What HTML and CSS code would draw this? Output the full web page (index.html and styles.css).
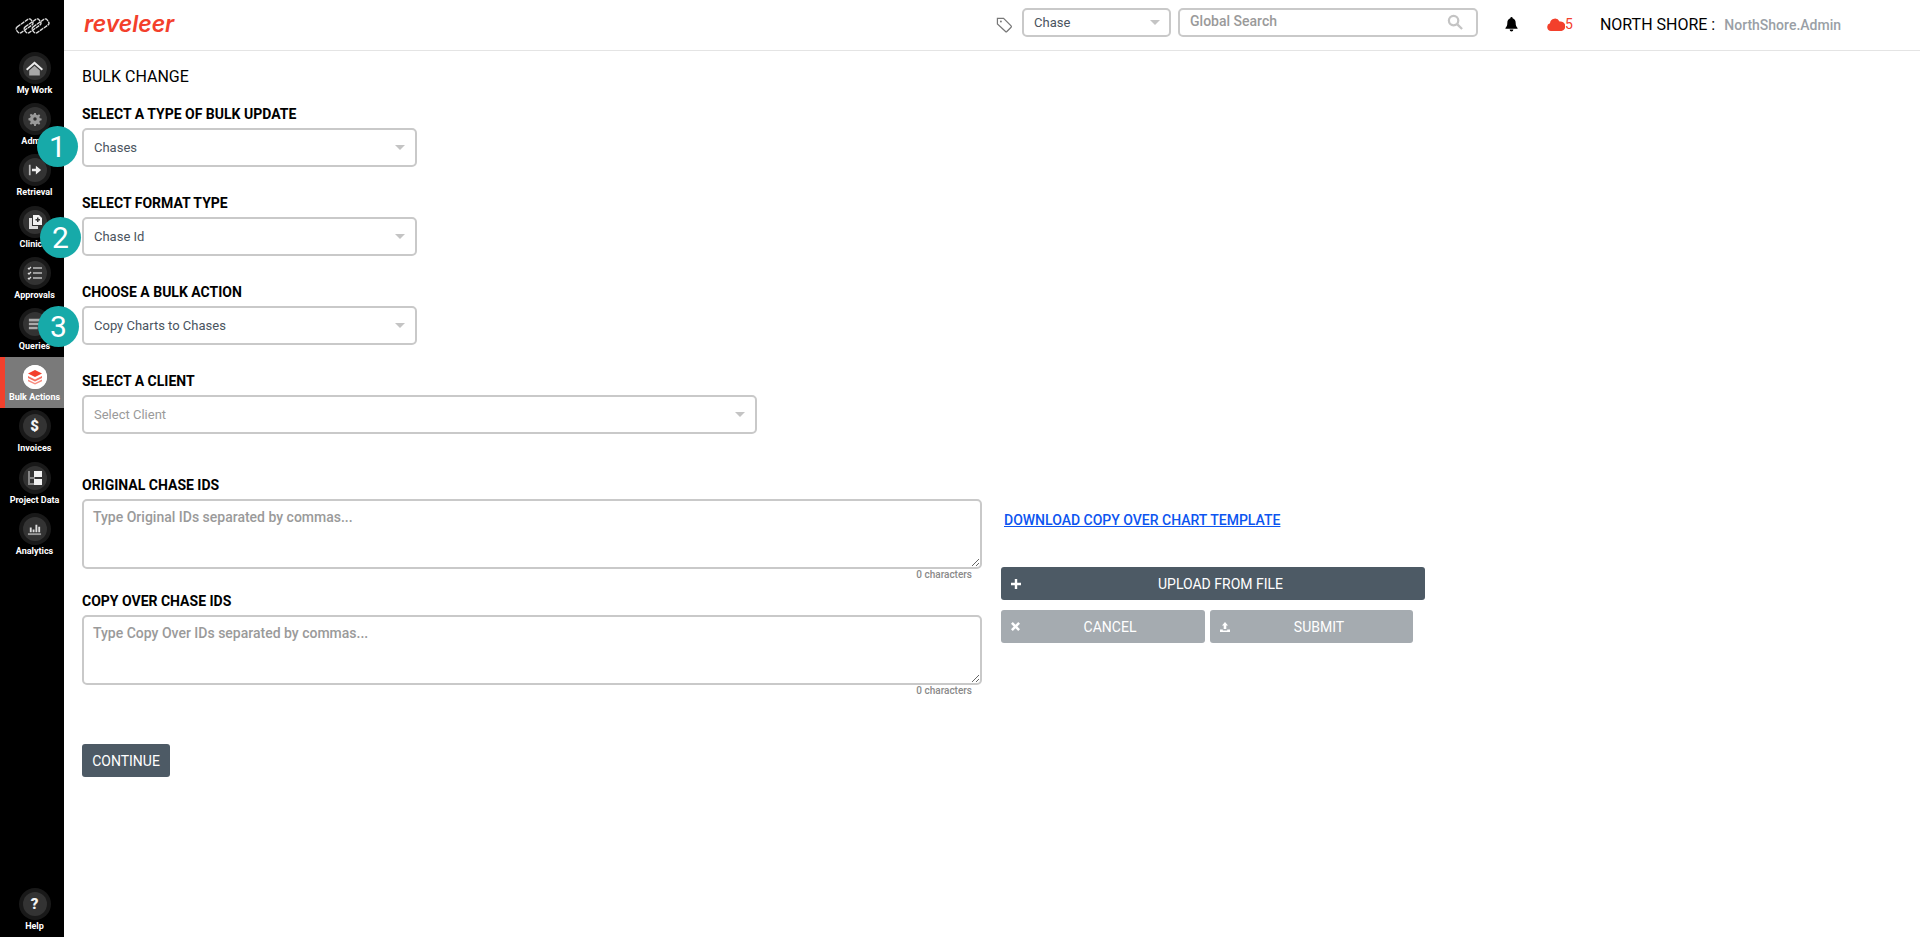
FILE: index.html
```html
<!DOCTYPE html>
<html lang="en">
<head>
<meta charset="utf-8">
<title>Bulk Change</title>
<link rel="stylesheet" href="styles.css">
</head>
<body>
<div class="app">
  <nav class="sidebar">
    <div class="side-logo">
      <svg width="37" height="18" viewBox="0 0 37 18" fill="none" stroke="#dcdcdc" stroke-width="1.300" stroke-dasharray="4 .7">
        <rect x="1.500" y="5.500" width="18" height="7" rx="2.500" transform="rotate(-35 10.500 9)"/>
        <rect x="9.500" y="5.500" width="18" height="7" rx="2.500" transform="rotate(-35 18.500 9)"/>
        <rect x="17.500" y="5.500" width="18" height="7" rx="2.500" transform="rotate(-35 26.500 9)"/>
      </svg>
    </div>
    <a class="nav-item"><span class="nav-ring"><span class="nav-disc">
      <svg viewBox="0 0 16 16" width="17" height="17" fill="#ececec"><path d="M8 1.500 0 8.500 1.200 9.800 8 4l6.800 5.800L16 8.500z"/><path d="M3 9.800 8 5.500l5 4.300V14.500H3z" fill="#a8a8a8"/></svg>
    </span></span><span class="nav-label">My Work</span></a>
    <a class="nav-item"><span class="nav-ring"><span class="nav-disc">
      <svg viewBox="0 0 16 16" width="14" height="14" fill="#9a9a9a"><path d="M7 1h2l.4 2 1.500.6 1.700-1.100 1.400 1.400-1.100 1.700.6 1.500 2 .4v2l-2 .4-.6 1.500 1.100 1.700-1.400 1.400-1.700-1.100-1.500.6-.4 2H7l-.4-2-1.500-.6-1.700 1.100-1.400-1.400 1.100-1.700-.6-1.500-2-.4V7l2-.4.6-1.500-1.100-1.700 1.400-1.400 1.700 1.100 1.500-.6z"/><circle cx="8" cy="8" r="2" fill="#333"/></svg>
    </span></span><span class="nav-label">Admin</span></a>
    <a class="nav-item"><span class="nav-ring"><span class="nav-disc">
      <svg viewBox="0 0 16 16" width="14" height="14" fill="#eee"><path d="M1 2h2v12H1z" fill="#bbb"/><path d="M4.500 6.500H9V3l6 5-6 5V9.500H4.500z"/></svg>
    </span></span><span class="nav-label">Retrieval</span></a>
    <a class="nav-item"><span class="nav-ring"><span class="nav-disc">
      <svg viewBox="0 0 16 16" width="16" height="16" fill="#f2f2f2"><path d="M2 4h3v8h6v3H2z" fill="#ddd"/><path d="M6 1h6l3 3v7H6z"/><path d="M10 3.500h1.500V5H13v1.500h-1.500V8H10V6.500H8.500V5H10z" fill="#333"/></svg>
    </span></span><span class="nav-label">Clinical</span></a>
    <a class="nav-item"><span class="nav-ring"><span class="nav-disc">
      <svg viewBox="0 0 16 16" width="16" height="16" fill="none" stroke="#ddd" stroke-width="1.300"><path d="M1 3l1 1 2-2M1 8l1 1 2-2M1 13l1 1 2-2"/><path d="M6 3h9M6 8h9M6 13h9" stroke="#999" stroke-width="2"/></svg>
    </span></span><span class="nav-label">Approvals</span></a>
    <a class="nav-item"><span class="nav-ring"><span class="nav-disc">
      <svg viewBox="0 0 16 16" width="14" height="14" fill="#aaa"><path d="M1 2h14v3H1zM1 6.500h14v3H1zM1 11h10v3H1z"/></svg>
    </span></span><span class="nav-label">Queries</span></a>
    <a class="nav-item nav-active"><span class="nav-ring"><span class="nav-disc">
      <svg viewBox="0 0 16 16" width="16" height="16" fill="#f3402c"><path d="M8 1l7 3.500L8 8 1 4.500z"/><path d="M1 7l7 3.500L15 7v2l-7 3.500L1 9z" opacity=".75"/><path d="M1 10.500 8 14l7-3.500v1.800L8 15.500 1 12.300z" opacity=".6"/></svg>
    </span></span><span class="nav-label">Bulk Actions</span></a>
    <a class="nav-item"><span class="nav-ring"><span class="nav-disc nav-text-icon">$</span></span><span class="nav-label">Invoices</span></a>
    <a class="nav-item"><span class="nav-ring"><span class="nav-disc">
      <svg viewBox="0 0 16 16" width="16" height="16" fill="#f2f2f2"><path d="M1 1h2v14H1zM3 7h5v2H3zM3 13h5v2H3z" fill="#888"/><path d="M7 1h8v6H7zM7 9h8v6H7z"/></svg>
    </span></span><span class="nav-label">Project Data</span></a>
    <a class="nav-item"><span class="nav-ring"><span class="nav-disc">
      <svg viewBox="0 0 16 16" width="15" height="15" fill="#ddd"><path d="M1 13h14v2H1z" fill="#999"/><path d="M3 7h2v5H3zM6 9h2v3H6zM9 4h2v8H9zM12 6h2v6h-2z"/></svg>
    </span></span><span class="nav-label">Analytics</span></a>
    <a class="nav-item nav-help"><span class="nav-ring"><span class="nav-disc nav-text-icon">?</span></span><span class="nav-label">Help</span></a>
  </nav>

  <div class="main">
    <header class="topbar">
      <div class="brand">reveleer</div>
      <div class="top-tools">
        <svg class="tag-icon" width="17" height="17" viewBox="0 0 18 18" fill="none" stroke="#777" stroke-width="1.300"><path d="M1.500 2.500h6.500l8 8a1 1 0 0 1 0 1.400l-4.500 4.500a1 1 0 0 1-1.400 0l-8.600-8z"/><circle cx="5.200" cy="5.800" r="1" fill="#777" stroke="none"/></svg>
        <div class="select select-top"><span>Chase</span><i class="caret"></i></div>
        <div class="search"><span>Global Search</span>
          <svg width="16" height="16" viewBox="0 0 17 17" fill="none" stroke="#c4c4c4" stroke-width="2.400"><circle cx="7" cy="7" r="5"/><path d="M11 11l5 5"/></svg>
        </div>
        <svg class="bell" width="13" height="15" viewBox="0 0 14 16" fill="#000"><path d="M7 0a1.200 1.200 0 0 1 1.200 1.300C10.500 2 11.500 3.800 11.500 6.500c0 3 .8 4 2 5.200v.8H.5v-.8c1.200-1.200 2-2.200 2-5.200C2.500 3.800 3.500 2 5.800 1.300A1.200 1.200 0 0 1 7 0z"/><path d="M5 13.500h4a2 2 0 0 1-4 0z"/></svg>
        <div class="alerts">
          <svg width="18" height="13" viewBox="0 0 18 13" fill="#f3402c"><path d="M4 13a4 4 0 0 1-1-7.800A5 5 0 0 1 12.500 3.500 3.800 3.800 0 0 1 14.500 13z"/></svg><span>5</span>
        </div>
        <div class="account"><span class="org">NORTH SHORE :</span><span class="user">NorthShore.Admin</span></div>
      </div>
    </header>

    <main class="content">
      <h1 class="page-title">BULK CHANGE</h1>
      <section class="field">
        <label class="label">SELECT A TYPE OF BULK UPDATE</label>
        <div class="select select-sm"><span>Chases</span><i class="caret"></i></div>
      </section>
      <section class="field">
        <label class="label">SELECT FORMAT TYPE</label>
        <div class="select select-sm"><span>Chase Id</span><i class="caret"></i></div>
      </section>
      <section class="field">
        <label class="label">CHOOSE A BULK ACTION</label>
        <div class="select select-sm"><span>Copy Charts to Chases</span><i class="caret"></i></div>
      </section>
      <section class="field">
        <label class="label">SELECT A CLIENT</label>
        <div class="select select-lg placeholder"><span>Select Client</span><i class="caret"></i></div>
      </section>

      <div class="id-row">
        <div class="id-fields">
          <label class="label">ORIGINAL CHASE IDS</label>
          <textarea class="ids" placeholder="Type Original IDs separated by commas..."></textarea>
          <div class="counter">0 characters</div>
          <label class="label label-second">COPY OVER CHASE IDS</label>
          <textarea class="ids" placeholder="Type Copy Over IDs separated by commas..."></textarea>
          <div class="counter">0 characters</div>
        </div>
        <div class="id-actions">
          <a class="download" href="#">DOWNLOAD COPY OVER CHART TEMPLATE</a>
          <button class="btn btn-dark btn-upload" type="button">
            <svg width="10" height="10" viewBox="0 0 10 10" fill="#fff"><path d="M3.800 0h2.400v3.800H10v2.400H6.200V10H3.800V6.200H0V3.800h3.800z"/></svg>
            <span>UPLOAD FROM FILE</span></button>
          <div class="btn-pair">
            <button class="btn btn-muted btn-cancel" type="button">
              <svg width="9" height="9" viewBox="0 0 10 10" fill="#fff"><path d="M2 0l3 3 3-3 2 2-3 3 3 3-2 2-3-3-3 3-2-2 3-3-3-3z"/></svg>
              <span>CANCEL</span></button>
            <button class="btn btn-muted btn-submit" type="button">
              <svg width="10" height="10" viewBox="0 0 10 10" fill="#fff"><path d="M5 0l3 3.500H6.300V7H3.700V3.500H2zM0 7.500h2.800V8.500h4.400V7.500H10V10H0z"/></svg>
              <span>SUBMIT</span></button>
          </div>
        </div>
      </div>
      <button class="btn btn-dark btn-continue" type="button">CONTINUE</button>
    </main>
  </div>

  <span class="step step-1">1</span>
  <span class="step step-2">2</span>
  <span class="step step-3">3</span>
</div>
</body>
</html>
```
FILE: styles.css
```css
* { box-sizing: border-box; }
html, body { margin: 0; height: 100%; }
body { font-family: Roboto, "Liberation Sans", sans-serif; color: #000; background: #fff; overflow: hidden; }
.app { display: flex; height: 937px; position: relative; }

.sidebar { width: 64px; flex: none; background: #000; display: flex; flex-direction: column; }
.side-logo { height: 50px; display: flex; align-items: center; justify-content: center; padding: 1px 0 0 0; margin-left: 1px; }
.nav-item { height: 51.2px; display: flex; flex-direction: column; align-items: center; color: #fff; padding-left: 5px; flex: none; }
.nav-ring { width: 32px; height: 32px; margin-top: 2px; border-radius: 50%; background: #191919; display: flex; align-items: center; justify-content: center; flex: none; }
.nav-disc { width: 24px; height: 24px; border-radius: 50%; background: #333; display: flex; align-items: center; justify-content: center; }
.nav-text-icon { font-size: 15px; font-weight: 900; color: #f4f4f4; }
.nav-label { font-size: 9px; font-weight: 700; line-height: 12px; white-space: nowrap; }
.nav-active { background: #7a7a7a; border-left: 5px solid #f3402c; padding-left: 0; }
.nav-active .nav-ring { background: #fff; width: 24px; height: 24px; margin-top: 8px; }
.nav-active .nav-disc { background: #fff; }
.nav-active .nav-label { margin-top: 2px; }
.nav-help { margin-top: auto; height: 51px; }

.main { flex: 1; min-width: 0; display: flex; flex-direction: column; }
.topbar { height: 51px; flex: none; border-bottom: 1px solid #e4e4e4; display: flex; align-items: center; justify-content: space-between; padding: 0 79px 2px 20px; }
.brand { font-family: Inter, Roboto, sans-serif; font-size: 23px; font-weight: 600; font-style: italic; color: #f3402c; }
.top-tools { display: flex; align-items: center; }
.tag-icon { margin-right: 9px; }
.select { border: 2px solid #c9c9c9; border-radius: 5px; display: flex; align-items: center; justify-content: space-between; font-size: 13px; color: #4a5460; background: #fff; }
.caret { width: 0; height: 0; border-left: 5px solid transparent; border-right: 5px solid transparent; border-top: 5px solid #c4c4c4; }
.select-top { width: 149px; height: 29px; padding: 0 9px 0 10px; margin-bottom: 4px; }
.search { width: 300px; height: 29px; margin: 0 0 4px 7px; border: 2px solid #c9c9c9; border-radius: 5px; display: flex; align-items: center; justify-content: space-between; padding: 0 13px 3px 10px; font-size: 14px; color: #9a9a9a; font-weight: 500; }
.search svg { margin-top: 3px; }
.bell { margin-left: 27px; }
.alerts { display: flex; align-items: center; margin-left: 29px; font-size: 14px; color: #f3402c; }
.account { margin-left: 27px; display: flex; align-items: baseline; }
.org { font-size: 16px; color: #000; }
.user { font-size: 14px; font-weight: 500; color: #9a9fa6; margin-left: 9px; }

.content { padding: 17px 18px 0; flex: 1; }
.page-title { font-size: 16px; font-weight: 400; line-height: 18px; margin: 0 0 20px; }
.field { margin-bottom: 28px; }
.label { display: block; font-size: 14px; font-weight: 700; line-height: 16px; margin-bottom: 6px; }
.select-sm, .select-lg { height: 39px; padding: 0 10px 0 10px; }
.select-sm { width: 335px; }
.select-lg { width: 675px; }
.placeholder { color: #9a9a9a; }
.id-row { display: flex; margin-top: 43px; }
.id-fields { width: 900px; flex: none; }
.ids { display: block; width: 900px; height: 70px; border: 2px solid #c9c9c9; border-radius: 5px; padding: 8px 9px; font: 500 14px Roboto, sans-serif; outline: none; margin: 0; }
.ids::placeholder { color: #9a9a9a; opacity: 1; }
.counter { font-size: 10px; font-weight: 500; color: #8a8a8a; text-align: right; line-height: 12px; padding-right: 10px; }
.label-second { margin-top: 12px; }
.id-actions { margin-left: 19px; width: 424px; display: flex; flex-direction: column; padding-top: 35px; }
.download { font-size: 14px; font-weight: 500; color: #0d55f0; margin-left: 3px; line-height: 16px; }
.btn { border: 0; border-radius: 3px; color: #fff; font: 400 14px Roboto, sans-serif; height: 33px; display: flex; align-items: center; padding: 0 10px; }
.btn span { flex: 1; text-align: center; padding-left: 5px; }
.btn-dark { background: #4d5a65; }
.btn-muted { background: #a5abb0; }
.btn-upload { width: 424px; margin-top: 39px; }
.btn-pair { display: flex; gap: 5px; margin-top: 10px; }
.btn-cancel { width: 204px; }
.btn-submit { width: 203px; }
.btn-continue { width: 88px; justify-content: center; margin-top: 47px; }

.step { position: absolute; width: 41px; height: 41px; border-radius: 50%; background: #17aaa9; color: #fff; font-size: 30px; line-height: 41px; text-align: center; }
.step-1 { left: 37px; top: 126px; }
.step-2 { left: 40px; top: 217px; }
.step-3 { left: 38px; top: 306px; }
```
